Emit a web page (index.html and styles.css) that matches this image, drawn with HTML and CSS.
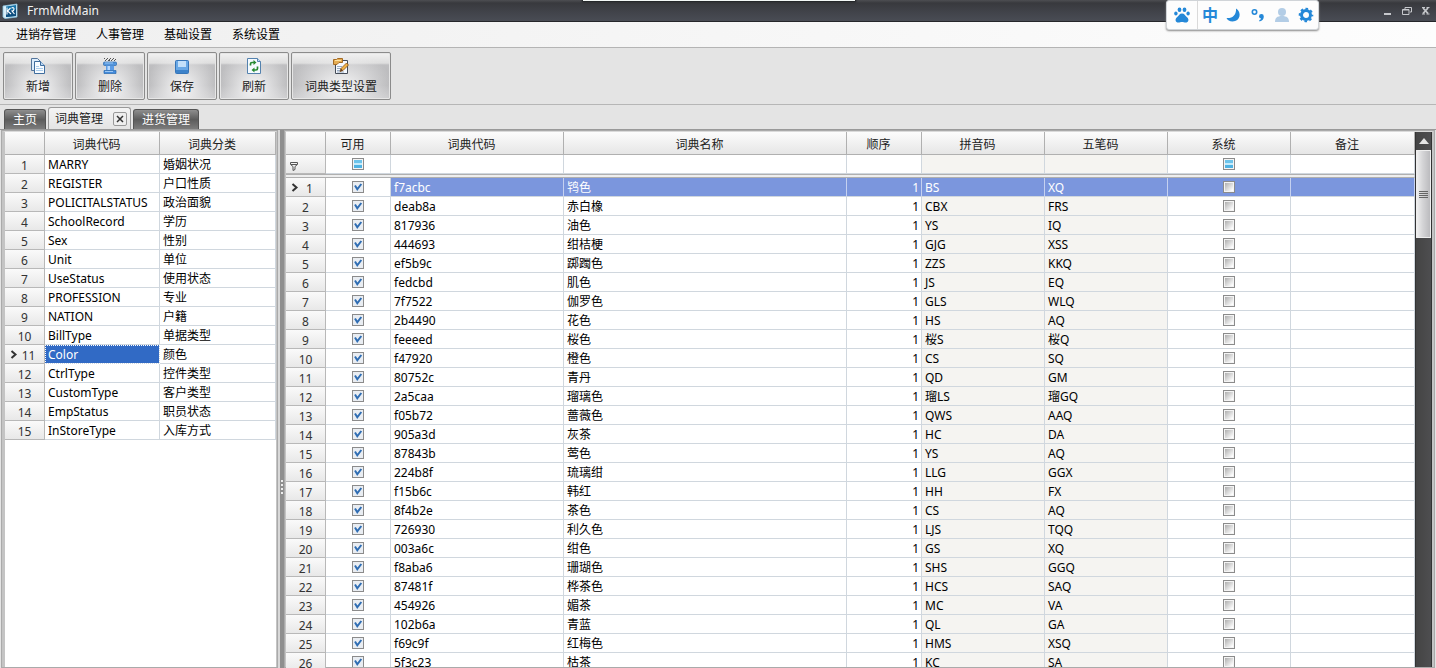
FILE: index.html
```
<!DOCTYPE html>
<html lang="zh-CN">
<head>
<meta charset="utf-8">
<title>FrmMidMain</title>
<link rel="stylesheet" href="styles.css">
</head>
<body>
<header class="titlebar">
  <svg class="app-icon" viewBox="0 0 16 16" aria-hidden="true">
    <path d="M1 3 15 1v13L3 15.500 1 14z" fill="#d9eef8"/>
    <path d="M4 3.500 14 2v11L4 14z" fill="#1673a8"/>
    <path d="M4 8 14 6v7L4 14z" fill="#0d4f80"/>
    <path d="M5 4.500v7M8.500 5 5.500 8 9 11M9.500 5q2.500-1 2.500 1T10 8l2.500 3" fill="none" stroke="#fff" stroke-width="1.100"/>
    <path d="M1 3 15 1v13L3 15.500 1 14z" fill="none" stroke="#8cc4e0" stroke-width=".8"/>
  </svg>
  <h1 class="title">FrmMidMain</h1>
  <div class="window-buttons">
    <button class="window-button" type="button" aria-label="最小化"><svg viewBox="0 0 10 10"><path d="M1 8h7" stroke="#c6c8cc" stroke-width="2"/></svg></button>
    <button class="window-button" type="button" aria-label="还原"><svg viewBox="0 0 10 10"><path d="M3 3V1.500h6.500V6H8M.5 3.500H7V8.500H.5zM.5 4H7" fill="none" stroke="#c6c8cc"/></svg></button>
    <button class="window-button" type="button" aria-label="关闭"><svg viewBox="0 0 10 10"><path d="M2 2l5 5.500M7 2 2 7.500" stroke="#c6c8cc" stroke-width="1.800"/><path d="M1 1.500h3M5.500 1.500h3M1 8h3M5.500 8h3" stroke="#c6c8cc"/></svg></button>
  </div>
</header>
<div class="dock-handle"></div>
<div class="ime-bar">
  <span class="ime-logo"><svg viewBox="0 0 16 16" fill="#2488d8"><ellipse cx="5.500" cy="2.800" rx="1.900" ry="2.300"/><ellipse cx="10.500" cy="2.800" rx="1.900" ry="2.300"/><ellipse cx="1.900" cy="6.500" rx="1.700" ry="2.100"/><ellipse cx="14.100" cy="6.500" rx="1.700" ry="2.100"/><path d="M8 6.500c2.500 0 3 2 5 3.700 2.500 2 1.500 5.300-1.300 5.300-1.600 0-2.200-.5-3.700-.5s-2.100.5-3.700.5C1.500 15.500.5 12.200 3 10.200 5 8.500 5.500 6.500 8 6.500z"/></svg></span>
  <span class="ime-item ime-language">中</span>
  <span class="ime-item"><svg viewBox="0 0 16 16"><path d="M10 1.500c6 3.500 4.500 13-3.500 13-3 0-5-1.200-6-3.500 6 .5 10-3 9.500-9.500z" fill="#2488d8"/></svg></span>
  <span class="ime-item"><svg viewBox="0 0 16 16"><circle cx="4.500" cy="5" r="2.200" fill="none" stroke="#2488d8" stroke-width="1.600"/><path d="M9 9.500a2.400 2.400 0 0 1 4.800 0c0 2.500-1.400 4.500-4.300 5l-.3-1.200c1.100-.4 1.700-1 1.900-1.700A2.300 2.300 0 0 1 9 9.500z" fill="#2488d8"/></svg></span>
  <span class="ime-item"><svg viewBox="0 0 16 16" fill="#b3cde6"><circle cx="8" cy="5" r="4"/><path d="M1 15c0-4 2-6 7-6s7 2 7 6z"/></svg></span>
  <span class="ime-item"><svg viewBox="0 0 16 16"><circle cx="8" cy="8" r="4.500" fill="none" stroke="#2488d8" stroke-width="3"/><circle cx="8" cy="8" r="6.300" fill="none" stroke="#2488d8" stroke-width="2" stroke-dasharray="2.600 2.348" stroke-dashoffset="1.300"/></svg></span>
</div>

<nav class="menu">
  <button class="menu-item" type="button">进销存管理</button>
  <button class="menu-item" type="button">人事管理</button>
  <button class="menu-item" type="button">基础设置</button>
  <button class="menu-item" type="button">系统设置</button>
</nav>

<div class="toolbar">
  <button class="tool" type="button">
    <svg viewBox="0 0 16 16"><path d="M1.500.5h6l3 3v9h-9z" fill="#dcecfb" stroke="#54759b"/><path d="M4.500 3.500h6l4 4v8h-10z" fill="#f7fbff" stroke="#3f6d9e"/><path d="M10.500 3.500v4h4" fill="#b9d7f3" stroke="#3f6d9e"/><path d="M6 8.500h3M6 10.500h7M6 12.500h7" stroke="#a9cbea"/></svg>
    新增</button>
  <button class="tool" type="button">
    <svg viewBox="0 0 16 16"><path d="M2 .5h1M5 .5h1M8 .5h1M11 .5h1M3 2.500h1M6 2.500h2M9 2.500h1M12 2.500h1M4 1.500h1M7 1.500h1M10 1.500h1M13 1.500h1" stroke="#555"/><rect x="1.500" y="4" width="13" height="3.500" rx="1" fill="#5596dc" stroke="#2868ad" stroke-width=".7"/><path d="M4 7.500h8v5H4z" fill="#5c9ce6"/><path d="M5.500 8h2.500v4H5.500z" fill="#b9daff"/><path d="M2 15.500v-3h12v3z" fill="#438bdd" stroke="#2868ad" stroke-width=".7"/><path d="M3 5h8M3 13.500h8" stroke="#9cc8f5"/></svg>
    删除</button>
  <button class="tool" type="button">
    <svg viewBox="0 0 16 16"><rect x="1.500" y="2.500" width="13" height="13" rx="1" fill="#4b91d8" stroke="#3675b8"/><path d="M2 3h12v9H2z" fill="#69a8e6"/><path d="M4 3h8v6H4z" fill="#c3e0fa"/><path d="M2 12h12v3H2z" fill="#3c82ca"/></svg>
    保存</button>
  <button class="tool" type="button">
    <svg viewBox="0 0 16 16"><path d="M1.500.5h10l3 3v12h-13z" fill="#f4faff" stroke="#5482ae"/><path d="M11.500.5v3h3" fill="#c5ddf2" stroke="#5482ae"/><path d="M4.500 7.500V6q0-1.500 1.500-1.500h2M11.500 8.500v2q0 1.500-1.500 1.500H8" fill="none" stroke="#258a32" stroke-width="1.700"/><path d="M7.500 2 10.500 4.500l-3 2.500zM8.500 9.500v5l-3-2.500z" fill="#258a32"/></svg>
    刷新</button>
  <button class="tool tool-wide" type="button">
    <svg viewBox="0 0 16 16"><path d="M2.500 2.500h12v13h-12z" fill="#f5f9ff" stroke="#454c58"/><path d="M4 8.500h5M4 10.500h4M4 12.500h3M4 14h7" stroke="#9aacc4"/><path d="M.5 6.500v-5h3l1-1h5v4H6l-2 2z" fill="#e5ad54" stroke="#a46a22"/><path d="M2 2.500h6" stroke="#ffe2a0"/><path d="M7 13.500l1-3 5.500-5.500 2 2L10 12.500z" fill="#f1b247" stroke="#8c5416" stroke-width=".8"/><path d="M7 13.500l1-3 2 2z" fill="#684322"/></svg>
    词典类型设置</button>
</div>

<div class="tabs">
  <button class="tab" type="button">主页</button>
  <div class="tab tab-active">词典管理<button class="tab-close" type="button" aria-label="关闭标签"><svg viewBox="0 0 8 8"><path d="M1 1l6 6M7 1 1 7" stroke="#333" stroke-width="1.500"/></svg></button></div>
  <button class="tab" type="button">进货管理</button>
</div>

<main class="workspace">
  <section class="pane pane-types">
    <table class="grid">
      <colgroup><col class="w-marker"><col class="w-type"><col></colgroup>
      <thead><tr><th></th><th>词典代码</th><th>词典分类</th></tr></thead>
      <tbody id="types"></tbody>
    </table>
  </section>
  <div class="splitter"><span class="splitter-grip"></span></div>
  <section class="pane pane-words">
    <table class="grid grid-words">
      <colgroup><col class="w-marker"><col class="w-enabled"><col class="w-code"><col class="w-name"><col class="w-order"><col class="w-short"><col class="w-short"><col class="w-short"><col></colgroup>
      <thead>
        <tr><th></th><th>可用</th><th>词典代码</th><th>词典名称</th><th>顺序</th><th>拼音码</th><th>五笔码</th><th>系统</th><th>备注</th></tr>
        <tr class="filter">
          <td class="marker"><svg viewBox="0 0 8 10"><path d="M.5 1.500h7v2L5 5.500v3L3 9.500v-4L.5 3.500zM1 3.500h6" fill="none" stroke="#555"/></svg></td>
          <td class="center"><input class="check check-mixed" type="checkbox" aria-label="筛选可用"></td>
          <td></td><td></td><td></td><td class="readonly"></td><td class="readonly"></td>
          <td class="center"><input class="check check-mixed" type="checkbox" aria-label="筛选系统"></td><td></td>
        </tr>
        <tr class="divider"><td colspan="9"></td></tr>
      </thead>
      <tbody id="words"></tbody>
    </table>
    <div class="scrollbar">
      <button class="scroll-up" type="button" aria-label="向上滚动"><svg viewBox="0 0 10 6"><path d="M0 6 5 0l5 6z" fill="#e4e4e4"/></svg></button>
      <div class="scroll-thumb"><span class="scroll-grip"></span></div>
    </div>
  </section>
</main>
<script src="app.js"></script>
</body>
</html>
```

FILE: styles.css
```
* { box-sizing: border-box; }

html, body { height: 100%; }

body {
  margin: 0;
  display: flex;
  flex-direction: column;
  overflow: hidden;
  background: #e4e4e4;
  color: #000;
  font: 12px/18px "Noto Sans", "Noto Sans CJK SC", sans-serif;
}

button {
  margin: 0;
  padding: 0;
  border: 0;
  background: none;
  color: inherit;
  font: inherit;
}

svg { display: block; }

/* Title bar */
.titlebar {
  display: flex;
  flex: none;
  align-items: center;
  height: 22px;
  padding: 0 5px 0 2px;
  border-bottom: 1px solid #25262a;
  background: linear-gradient(#4d4e52 0, #38393d 3px, #41434a 12px, #494c54 100%);
}

.app-icon { width: 16px; height: 16px; }

.title {
  margin: 0 0 0 9px;
  color: #f2f2f2;
  font-size: 12px;
  font-weight: 400;
}

.window-buttons { display: flex; gap: 9px; margin-left: auto; }
.window-button svg { width: 10px; height: 10px; }

.dock-handle {
  position: absolute;
  top: 0;
  left: 50%;
  width: 272px;
  height: 1px;
  margin-left: -135px;
  background: #f4f8f6;
  box-shadow: 0 0 2px 1px #1c1e20;
}

.ime-bar {
  position: absolute;
  top: 0;
  right: 117px;
  display: flex;
  align-items: center;
  gap: 8px;
  height: 30px;
  padding-right: 4px;
  border: 1px solid #d0d4d8;
  border-radius: 3px;
  background: #fdfdfd;
  box-shadow: 0 1px 2px #8a8a8a;
}

.ime-logo {
  display: flex;
  align-items: center;
  height: 28px;
  padding: 0 7px;
  margin-right: -4px;
  border-right: 1px solid #dadada;
}

.ime-bar svg { width: 16px; height: 16px; }
.ime-item { width: 16px; }

.ime-language {
  color: #2488d8;
  font: 700 16px/26px "Noto Sans CJK SC", sans-serif;
  height: 28px;
}

/* Menu */
.menu {
  display: flex;
  flex: none;
  gap: 20px;
  height: 26px;
  padding: 0 16px;
  border-bottom: 1px solid #b4b4b4;
  background: linear-gradient(90deg, #efefef, #fdfdfd);
}

/* Toolbar */
.toolbar {
  display: flex;
  flex: none;
  gap: 2px;
  padding: 4px 3px;
  border-bottom: 1px solid #b6b6b6;
  background: #e4e4e4;
}

.tool {
  display: flex;
  flex-direction: column;
  align-items: center;
  gap: 4px;
  width: 70px;
  height: 48px;
  padding-top: 5px;
  border: 1px solid #8b8b8b;
  border-radius: 2px;
  background: radial-gradient(ellipse at 50% 75%, #f0f0f1 10%, transparent 75%), linear-gradient(#f2f2f2 0, #dedede 22%, #bfbfc1 26%, #b8b8ba 70%, #cdcdcf 100%);
  box-shadow: inset 0 0 0 1px #e6e6e6;
  color: #222;
}

.tool-wide { width: 100px; }
.tool svg { width: 16px; height: 16px; }

/* Tabs */
.tabs {
  display: flex;
  flex: none;
  align-items: flex-end;
  gap: 2px;
  height: 24px;
  padding: 0 4px;
}

.tab {
  height: 20px;
  padding: 0 8px;
  border: 1px solid #555;
  border-bottom: 0;
  border-radius: 3px 3px 0 0;
  background: linear-gradient(#8e8e8e, #5c5c5c 50%, #7c7c7c);
  color: #fff;
}

.tab-active {
  display: flex;
  align-items: center;
  gap: 10px;
  height: 22px;
  padding: 0 3px 0 6px;
  border-color: #999;
  background: linear-gradient(#f4f4f4, #e4e4e4);
  color: #222;
}

.tab-close {
  display: grid;
  place-items: center;
  width: 14px;
  height: 14px;
  border: 1px solid #999;
  border-radius: 2px;
  background: #eee;
}

.tab-close svg { width: 8px; height: 8px; }

/* Panes */
.workspace {
  display: flex;
  flex: 1;
  min-height: 0;
  padding: 0 1px;
  border-top: 1px solid #999;
}

.pane {
  overflow: hidden;
  border: 2px solid #c4c4c4;
  border-top: 2px solid #dadada;
  border-bottom: 0;
  outline: 1px solid #aaa;
  outline-offset: -1px;
  background: #fff;
}

.pane-types { flex: 0 0 277px; border-left-width: 4px; border-right-width: 2px; }
.pane-words { display: flex; flex: 1; min-width: 0; border-right-width: 3px; }

.splitter {
  display: grid;
  flex: 0 0 6px;
  place-items: center;
  border-left: 2px solid #d8d8d8;
  background: #8f8f8f;
}

.splitter-grip {
  width: 2px;
  height: 14px;
  margin-top: 176px;
  background: repeating-linear-gradient(#eee 0 2px, transparent 2px 4px);
}

/* Data grids */
.grid {
  width: 100%;
  border-collapse: separate;
  border-spacing: 0;
  table-layout: fixed;
}

.grid-words { flex: 1; align-self: flex-start; min-width: 0; }

.w-marker { width: 40px; }
.w-type { width: 115px; }
.w-enabled { width: 65px; }
.w-code { width: 173px; }
.w-name { width: 283px; }
.w-order { width: 75px; }
.w-short { width: 123px; }

.grid th {
  height: 23px;
  padding: 3px 11px 0 0;
  border-right: 1px solid #b0b0b0;
  border-bottom: 1px solid #b0b0b0;
  background: linear-gradient(#fcfcfc, #e6e6e6);
  color: #222;
  font-weight: 400;
}

.grid td {
  height: 19px;
  padding: 0 3px;
  overflow: hidden;
  border-right: 1px solid #d0d7de;
  border-bottom: 1px solid #d0d7de;
  line-height: 17px;
  white-space: nowrap;
}

.grid .marker {
  position: relative;
  padding: 3px 0 0;
  border-color: #b8b8b8;
  background: linear-gradient(#fafafa, #e8e8e8);
  color: #333;
  line-height: 15px;
  text-align: center;
}

.marker > svg { width: 8px; height: 10px; margin-left: 4px; }
.marker-current { padding-left: 8px; }

.marker .arrow {
  position: absolute;
  top: 5px;
  left: 5px;
  width: 8px;
  height: 9px;
  margin: 0;
}

.grid .center { padding: 0; text-align: center; }
.grid .number { padding-right: 2px; text-align: right; }
.grid .readonly { background: #f5f4f1; }

.grid .cell-selected {
  outline: 1px dotted #fff;
  outline-offset: -1px;
  background: #316ac5;
  color: #fff;
}

.grid .row-selected td:nth-child(n + 3) {
  border-right-color: #c5d1f0;
  background: #7b96dd;
  color: #fff;
}

.grid .divider td {
  height: 4px;
  padding: 0;
  border-top: 1px solid #b0b0b0;
  border-bottom: 1px solid #b0b0b0;
  background: #eee;
  line-height: 0;
}

.check {
  display: block;
  width: 12px;
  height: 12px;
  margin: 0 auto;
  appearance: none;
  border: 1px solid #8b8b8b;
  background: linear-gradient(135deg, #a4a4a4, #fff 85%);
  box-shadow: inset 0 0 0 1px #f4f4f4;
}

.check:checked {
  background: url("data:image/svg+xml,%3Csvg xmlns='http://www.w3.org/2000/svg' viewBox='0 0 10 10'%3E%3Crect width='10' height='10' fill='%23e9edf2'/%3E%3Cpath d='M2 3.500 4.300 7.300 8.300 2' fill='none' stroke='%232f6db3' stroke-width='2'/%3E%3C/svg%3E");
  box-shadow: none;
}

.check-mixed {
  background: linear-gradient(#6cc3ea 40%, #c5ebfb 40% 60%, #4fb2e2 60%);
}

/* Scroll bar */
.scrollbar {
  flex: 0 0 17px;
  border-right: 1px solid #333;
  border-left: 1px solid #333;
  background: linear-gradient(90deg, #444, #4e4e50);
}

.scroll-up {
  display: grid;
  place-items: center;
  width: 100%;
  height: 18px;
}

.scroll-up svg { width: 10px; height: 6px; }

.scroll-thumb {
  display: grid;
  place-items: center;
  height: 88px;
  border: 1px solid #eee;
  background: linear-gradient(90deg, #eee, #d6d6d8 40%, #bbbbbe);
}

.scroll-grip {
  width: 9px;
  height: 7px;
  background: repeating-linear-gradient(#666 0 1px, transparent 1px 2px);
}
```

FILE: app.js
```
const types = [
  ["MARRY", "婚姻状况"], ["REGISTER", "户口性质"], ["POLICITALSTATUS", "政治面貌"],
  ["SchoolRecord", "学历"], ["Sex", "性别"], ["Unit", "单位"], ["UseStatus", "使用状态"],
  ["PROFESSION", "专业"], ["NATION", "户籍"], ["BillType", "单据类型"], ["Color", "颜色"],
  ["CtrlType", "控件类型"], ["CustomType", "客户类型"], ["EmpStatus", "职员状态"], ["InStoreType", "入库方式"]
];

const words = [
  ["f7acbc", "鸨色", "BS", "XQ"], ["deab8a", "赤白橡", "CBX", "FRS"], ["817936", "油色", "YS", "IQ"],
  ["444693", "绀桔梗", "GJG", "XSS"], ["ef5b9c", "踯躅色", "ZZS", "KKQ"], ["fedcbd", "肌色", "JS", "EQ"],
  ["7f7522", "伽罗色", "GLS", "WLQ"], ["2b4490", "花色", "HS", "AQ"], ["feeeed", "桜色", "桜S", "桜Q"],
  ["f47920", "橙色", "CS", "SQ"], ["80752c", "青丹", "QD", "GM"], ["2a5caa", "瑠璃色", "瑠LS", "瑠GQ"],
  ["f05b72", "蔷薇色", "QWS", "AAQ"], ["905a3d", "灰茶", "HC", "DA"], ["87843b", "莺色", "YS", "AQ"],
  ["224b8f", "琉璃绀", "LLG", "GGX"], ["f15b6c", "韩红", "HH", "FX"], ["8f4b2e", "茶色", "CS", "AQ"],
  ["726930", "利久色", "LJS", "TQQ"], ["003a6c", "绀色", "GS", "XQ"], ["f8aba6", "珊瑚色", "SHS", "GGQ"],
  ["87481f", "桦茶色", "HCS", "SAQ"], ["454926", "媚茶", "MC", "VA"], ["102b6a", "青蓝", "QL", "GA"],
  ["f69c9f", "红梅色", "HMS", "XSQ"], ["5f3c23", "枯茶", "KC", "SA"]
];

const arrow = '<svg class="arrow" viewBox="0 0 8 9"><path d="M1.500 1 5.500 4.500 1.500 8" fill="none" stroke="#333" stroke-width="2"/></svg>';

function marker(index, current) {
  return current
    ? `<td class="marker"><div class="marker-current">${arrow}${index + 1}</div></td>`
    : `<td class="marker">${index + 1}</td>`;
}

document.getElementById("types").innerHTML = types.map(([code, name], i) => {
  const current = code === "Color";
  return `<tr>${marker(i, current)}<td${current ? ' class="cell-selected"' : ""}>${code}</td><td>${name}</td></tr>`;
}).join("");

document.getElementById("words").innerHTML = words.map(([code, name, pinyin, wubi], i) => `
  <tr${i === 0 ? ' class="row-selected"' : ""}>${marker(i, i === 0)}
    <td class="center"><input class="check" type="checkbox" checked aria-label="可用 ${code}"></td>
    <td>${code}</td><td>${name}</td><td class="number">1</td>
    <td class="readonly">${pinyin}</td><td class="readonly">${wubi}</td>
    <td class="center"><input class="check" type="checkbox" aria-label="系统 ${code}"></td><td></td>
  </tr>`).join("");
```
